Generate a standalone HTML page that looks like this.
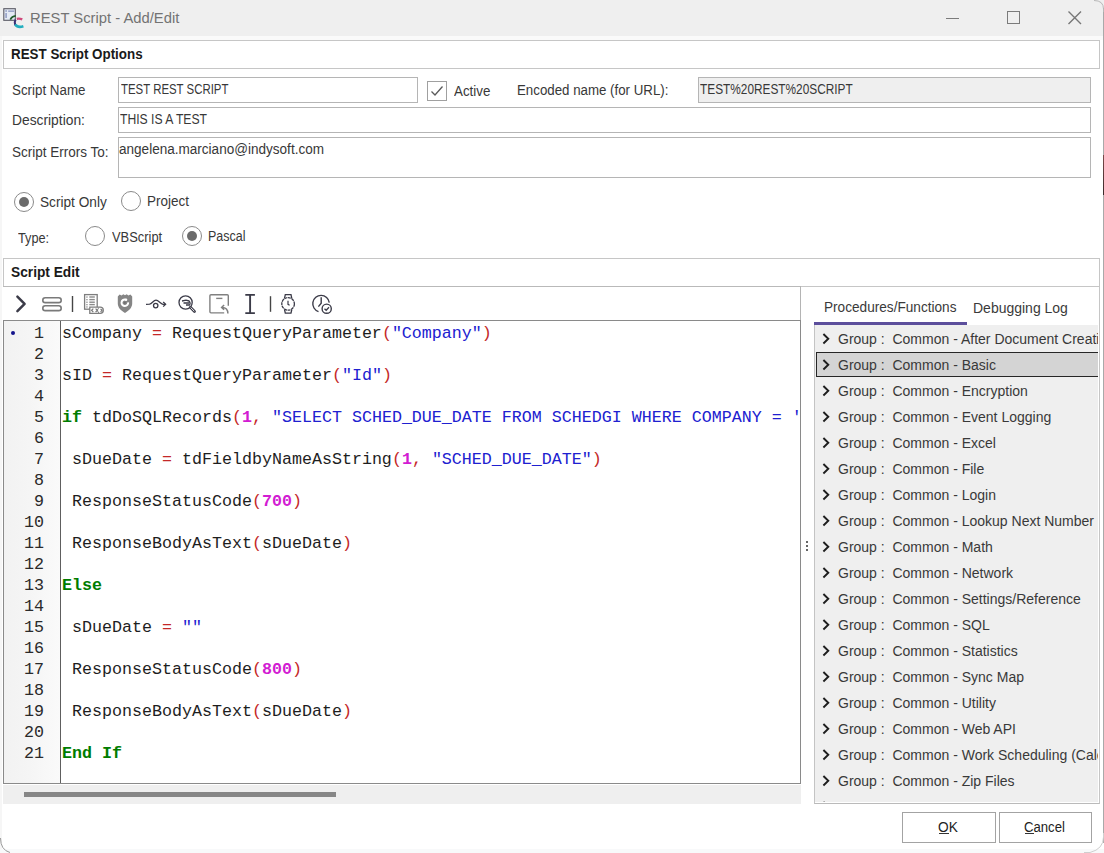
<!DOCTYPE html>
<html><head><meta charset="utf-8">
<style>
*{margin:0;padding:0;box-sizing:border-box}
html,body{width:1104px;height:853px;overflow:hidden;background:#fff}
body{position:relative;font-family:"Liberation Sans",sans-serif;color:#222}
.a{position:absolute}
.t{position:absolute;white-space:pre;line-height:1;transform-origin:0 0}
.box{position:absolute;border:1px solid #b5b5b5;background:#fff}
.panel{position:absolute;border:1px solid #c6c6c6;background:#fff}
.radio{position:absolute;width:20px;height:20px;border:1px solid #8a8a8a;border-radius:50%;background:#fff}
.radio.on::after{content:"";position:absolute;left:4px;top:4px;width:10px;height:10px;border-radius:50%;background:#6b6b6b}
.mono{font-family:"Liberation Mono",monospace;font-size:16.66px;line-height:21px;white-space:pre}
.code{position:absolute;color:#1e1e1e}
.ln{position:absolute;color:#2a2a2a;text-align:right}
.op{color:#c42828}
.st{color:#2020d0}
.kw{color:#007c00;font-weight:bold}
.nm{color:#d21cd2;font-weight:bold}
.item{position:absolute;left:1px;width:300px;height:25px}
.item.sel{background:#d4d4d4;border:1px solid #262626}
.item .chev{position:absolute;left:5px;top:7px;width:10px;height:12px}
.item.sel .chev{left:4px;top:6px}
.item .lbl{position:absolute;left:22px;top:3px;white-space:pre;font-size:14px;line-height:16px;color:#393939}
.item.sel .lbl{left:21px;top:2px}
</style></head><body>

<!-- title bar -->
<div class="a" style="left:0;top:0;width:1104px;height:36px;background:#efefef"></div>
<div class="a" style="left:0;top:36px;width:1104px;height:4px;background:#fafafa"></div>
<svg class="a" style="left:0;top:0" width="30" height="32" viewBox="0 0 30 32">
  <rect x="3.8" y="8.7" width="11.5" height="11.6" fill="#e4eaf5" stroke="#5a5a64" stroke-width="1.1"/>
  <rect x="5.4" y="10.3" width="1.4" height="1.4" fill="#7a86b0"/><rect x="8.2" y="10.5" width="6" height="1.3" fill="#8a96c0"/>
  <rect x="5.4" y="13" width="1.4" height="5" fill="#8a96c0"/>
  <path d="M10.3 19.6 Q11.8 16.2 15.8 15.9" fill="none" stroke="#1f5a2a" stroke-width="1.7"/>
  <path d="M16.8 18.8 Q19.6 18.2 22.3 19.4" fill="none" stroke="#d04a7c" stroke-width="2.3"/>
  <path d="M15.6 19.6 Q13.9 22.3 15.2 25" fill="none" stroke="#3a3276" stroke-width="2"/>
  <path d="M15.2 24.4 Q17.6 28 23.4 26.2" fill="none" stroke="#22aebf" stroke-width="2.7"/>
</svg>
<div class="t" id="title" style="left:30.00px;top:9.61px;font-size:15.5px;font-weight:normal;color:#737373;transform:scaleX(0.9539)">REST Script - Add/Edit</div>
<div class="a" style="left:946px;top:18px;width:13px;height:1px;background:#7b7b7b"></div>
<div class="a" style="left:1007px;top:11px;width:13px;height:13px;border:1px solid #7b7b7b"></div>
<svg class="a" style="left:1067px;top:10px" width="16" height="16" viewBox="0 0 16 16"><path d="M1.5 1.5 L14 14 M14 1.5 L1.5 14" stroke="#777" stroke-width="1.4"/></svg>

<!-- window edges -->
<div class="a" style="left:0;top:36px;width:2px;height:817px;background:#f6f6f6"></div>
<div class="a" style="left:1103px;top:8px;width:1px;height:835px;background:#a9a9a9"></div>
<div class="a" style="left:0;top:849px;width:1104px;height:4px;background:#f8f9fa"></div>
<svg class="a" style="left:1084px;top:833px" width="20" height="20" viewBox="0 0 20 20"><path d="M19.5 0 L19.5 4 Q19.5 16 6 19.5 L0 19.5" fill="none" stroke="#cfcfcf" stroke-width="1"/></svg>
<svg class="a" style="left:1090px;top:0" width="14" height="12" viewBox="0 0 14 12"><path d="M4 0.5 Q13.5 0.5 13.5 9 L13.5 12" fill="none" stroke="#b8b8b8" stroke-width="1"/></svg>
<svg class="a" style="left:0;top:838px" width="12" height="15" viewBox="0 0 12 15"><path d="M0.5 0 Q0.5 12 10 14.5" fill="none" stroke="#9a9a9a" stroke-width="1"/></svg>
<!-- outer script edit frame right line -->
<div class="a" style="left:1099px;top:287px;width:1px;height:40px;background:#c6c6c6"></div>
<div class="a" style="left:1103px;top:155px;width:1px;height:40px;background:linear-gradient(#7a4a4a,#3a2a2a)"></div>
<!-- REST Script Options -->
<div class="panel" style="left:3px;top:40px;width:1097px;height:29px"></div>
<div class="t" id="opt" style="left:11.00px;top:47.51px;font-size:13.8px;font-weight:bold;color:#1a1a1a;transform:scaleX(0.9701)">REST Script Options</div>
<div class="t" id="sname" style="left:12.00px;top:83.33px;font-size:14px;font-weight:normal;color:#383838;transform:scaleX(0.9535)">Script Name</div>
<div class="box" style="left:118px;top:77px;width:300px;height:26px"></div>
<div class="t" id="sval" style="left:121.00px;top:82.33px;font-size:14px;font-weight:normal;color:#383838;transform:scaleX(0.8155)">TEST REST SCRIPT</div>
<div class="box" style="left:427px;top:81px;width:20px;height:20px;border-color:#a0a0a0"></div>
<svg class="a" style="left:427px;top:81px" width="20" height="20" viewBox="0 0 20 20"><path d="M4.5 10.5 L8 14 L15.5 5.5" fill="none" stroke="#5a5a5a" stroke-width="1.3"/></svg>
<div class="t" id="active" style="left:454.00px;top:84.33px;font-size:14px;font-weight:normal;color:#383838;transform:scaleX(0.9519)">Active</div>
<div class="t" id="enc" style="left:517.00px;top:83.33px;font-size:14px;font-weight:normal;color:#383838;transform:scaleX(0.9494)">Encoded name (for URL):</div>
<div class="box" style="left:698px;top:77px;width:393px;height:26px;background:#efefef"></div>
<div class="t" id="encval" style="left:700.00px;top:82.33px;font-size:14px;font-weight:normal;color:#383838;transform:scaleX(0.8459)">TEST%20REST%20SCRIPT</div>
<div class="t" id="desc" style="left:12.00px;top:113.33px;font-size:14px;font-weight:normal;color:#383838;transform:scaleX(0.9861)">Description:</div>
<div class="box" style="left:118px;top:107px;width:973px;height:26px"></div>
<div class="t" id="dval" style="left:120.00px;top:112.33px;font-size:14px;font-weight:normal;color:#383838;transform:scaleX(0.8688)">THIS IS A TEST</div>
<div class="t" id="err" style="left:12.00px;top:145.33px;font-size:14px;font-weight:normal;color:#383838;transform:scaleX(0.9653)">Script Errors To:</div>
<div class="box" style="left:118px;top:137px;width:973px;height:41px"></div>
<div class="t" id="eval" style="left:119.00px;top:142.33px;font-size:14px;font-weight:normal;color:#383838;transform:scaleX(0.9675)">angelena.marciano@indysoft.com</div>

<div class="radio on" style="left:14px;top:192px"></div>
<div class="t" id="ronly" style="left:40.00px;top:195.33px;font-size:14px;font-weight:normal;color:#383838;transform:scaleX(0.9748)">Script Only</div>
<div class="radio" style="left:121px;top:191px"></div>
<div class="t" id="rproj" style="left:147.00px;top:194.33px;font-size:14px;font-weight:normal;color:#383838;transform:scaleX(0.9626)">Project</div>
<div class="t" id="type" style="left:18.00px;top:231.33px;font-size:14px;font-weight:normal;color:#383838;transform:scaleX(0.9091)">Type:</div>
<div class="radio" style="left:85px;top:226px"></div>
<div class="t" id="rvb" style="left:111.50px;top:230.33px;font-size:14px;font-weight:normal;color:#383838;transform:scaleX(0.9203)">VBScript</div>
<div class="radio on" style="left:182px;top:226px"></div>
<div class="t" id="rpas" style="left:207.50px;top:229.33px;font-size:14px;font-weight:normal;color:#383838;transform:scaleX(0.8906)">Pascal</div>

<!-- Script Edit -->
<div class="panel" style="left:3px;top:258px;width:1097px;height:29px"></div>
<div class="a" style="left:3px;top:286px;width:798px;height:1px;background:#b9b9b9"></div>
<div class="t" id="sedit" style="left:11.00px;top:265.51px;font-size:13.8px;font-weight:bold;color:#1a1a1a;transform:scaleX(0.9947)">Script Edit</div>

<!-- toolbar -->
<div class="a" style="left:800px;top:286px;width:1px;height:35px;background:#b4b4b4"></div>
<svg class="a" style="left:0;top:287px" width="340" height="34" viewBox="0 287 340 34">
  <path d="M17.4 296.6 L24.6 303.9 L17.4 311.2" fill="none" stroke="#3b3b48" stroke-width="2.5" stroke-linecap="round" stroke-linejoin="round"/>
  <rect x="42.8" y="297.8" width="18.4" height="4.8" rx="2.4" fill="none" stroke="#7a7a7a" stroke-width="1.6"/>
  <rect x="42.8" y="305.8" width="18.4" height="4.8" rx="2.4" fill="none" stroke="#7a7a7a" stroke-width="1.6"/>
  <rect x="71.8" y="296" width="1.4" height="16" fill="#454545"/>
  <rect x="84.6" y="294.6" width="12.6" height="14.6" fill="#fff" stroke="#7d7d7d" stroke-width="1.3"/>
  <g fill="#8a8a8a"><rect x="86.3" y="296.4" width="1.3" height="1.3"/><rect x="89.3" y="296.3" width="5.5" height="1.4"/>
  <rect x="86.3" y="299" width="1.3" height="1.3"/><rect x="89.3" y="298.9" width="5.5" height="1.4"/>
  <rect x="86.3" y="301.6" width="1.3" height="1.3"/><rect x="89.3" y="301.5" width="5.5" height="1.4"/>
  <rect x="86.3" y="304" width="1.3" height="1.3"/><rect x="89.3" y="303.9" width="5.5" height="1.4"/>
  <rect x="86.3" y="306.3" width="1.3" height="1.3"/></g>
  <path d="M89.8 307.2 L100.2 307.2 A3.1 3.1 0 0 1 100.2 313.4 L89.8 313.4 Z" fill="#fff" stroke="#7d7d7d" stroke-width="1.3"/>
  <path d="M99.2 307.6 A3 3 0 0 0 99.2 313" fill="none" stroke="#7d7d7d" stroke-width="1"/>
  <path d="M93.3 308.6 L91.6 310.3 L93.3 312 M95.6 308.6 L97.3 310.3 L95.6 312 M100.6 308.8 L102 310.3 L100.6 311.8" fill="none" stroke="#777" stroke-width="1.2"/>
  <path d="M117.8 296.6 L119.6 294.6 L121.6 295.6 L123.3 294.3 L125 295.3 L126.7 294.3 L128.4 295.6 L130.4 294.6 L132.2 296.6 L132.2 303.6 C132.2 307.6 129 310.9 125 312.9 C121 310.9 117.8 307.6 117.8 303.6 Z" fill="#858585"/>
  <path d="M125.4 299.5 A3.3 3.3 0 1 0 128.1 302.3" fill="none" stroke="#fff" stroke-width="2"/>
  <circle cx="126" cy="299.8" r="1.3" fill="#fff"/>
  <circle cx="124.8" cy="302.8" r="1.1" fill="#707070"/>
  <path d="M146 304.3 L149.6 304.2 C152 303.6 153.5 300.2 156 300.2 C158.6 300.2 160.4 303.8 163 304.3 L165.4 304.3" fill="none" stroke="#3b3b48" stroke-width="1.25"/>
  <path d="M163.2 302 L165.6 304.3 L163.2 306.6" fill="none" stroke="#3b3b48" stroke-width="1.3"/>
  <circle cx="155.7" cy="305.6" r="2.2" fill="#fff" stroke="#3b3b48" stroke-width="1.3"/>
  <circle cx="185.6" cy="302.5" r="6.6" fill="none" stroke="#3b3b48" stroke-width="1.3"/>
  <path d="M190.4 307.3 L194.5 311.4" stroke="#3b3b48" stroke-width="2.8" stroke-linecap="round"/>
  <path d="M190.6 307.5 L194.3 311.2" stroke="#fff" stroke-width="0.9"/>
  <path d="M182 301 L186 300.2 L189.2 301 M183.5 303 L189 303 M186 305 L189 305 M189 301 C190.2 302.5 190.2 304.5 189 305.5" fill="none" stroke="#3b3b48" stroke-width="1.3"/>
  <path d="M224.2 312.9 L211 312.9 Q209.9 312.9 209.9 311.8 L209.9 295.8 Q209.9 294.7 211 294.7 L227.2 294.7 Q228.3 294.7 228.3 295.8 L228.3 305.7" fill="none" stroke="#808080" stroke-width="1.4"/>
  <path d="M216.2 298.4 L222.4 298.4" stroke="#808080" stroke-width="1.4"/>
  <path d="M227.9 313.6 C227.9 309.6 226.5 307.4 222 307.4 M224.1 305 L221.6 307.4 L224.1 309.8" fill="none" stroke="#808080" stroke-width="1.5"/>
  <path d="M245.3 294.9 L254.9 294.9 M250.1 294.9 L250.1 313.1 M245.3 313.1 L254.9 313.1" fill="none" stroke="#3b3b48" stroke-width="1.9"/>
  <rect x="269.8" y="296.2" width="1.4" height="15.6" fill="#454545"/>
  <path d="M284.5 298.3 L285.3 294.6 L291 294.6 L291.8 298.3 M284.5 309.5 L285.3 313.2 L291 313.2 L291.8 309.5" fill="none" stroke="#3b3b48" stroke-width="1.3"/>
  <circle cx="288.1" cy="303.9" r="6.3" fill="#fff" stroke="#3b3b48" stroke-width="1.3" stroke-dasharray="3 0.6"/>
  <path d="M288 300.8 L288 304.3 L289.6 305.2" fill="none" stroke="#3b3b48" stroke-width="1.2"/>
  <path d="M318.5 311.6 A8.3 8.3 0 1 1 329.3 302.6" fill="none" stroke="#3b3b48" stroke-width="1.4"/>
  <path d="M321.2 297.3 L321.2 303.3 L318.4 306.6" fill="none" stroke="#3b3b48" stroke-width="1.4"/>
  <circle cx="326.7" cy="308.7" r="4.6" fill="#fff" stroke="#3b3b48" stroke-width="1.4"/>
  <path d="M324.5 308.7 L326.2 310.3 L329 307.3" fill="none" stroke="#3b3b48" stroke-width="1.3"/>
</svg>

<!-- editor -->
<div class="a" style="left:3px;top:320px;width:798px;height:464px;border:1px solid #8a8a8a;background:#fff;overflow:hidden">
  <div class="a" style="left:0;top:0;width:57px;height:462px;background:linear-gradient(90deg,#f2f2f2 0,#f5f5f5 45%,#fafafa 100%);border-right:1px solid #5e5e5e"></div>
  <div class="a" style="left:7px;top:10px;width:4px;height:4px;border-radius:50%;background:#14148c"></div>
  <div class="ln mono" style="left:0;top:2px;width:40px">1
2
3
4
5
6
7
8
9
10
11
12
13
14
15
16
17
18
19
20
21</div>
  <div class="code mono" style="left:58px;top:2px">sCompany <span class="op">=</span> RequestQueryParameter<span class="op">(</span><span class="st">"Company"</span><span class="op">)</span>

sID <span class="op">=</span> RequestQueryParameter<span class="op">(</span><span class="st">"Id"</span><span class="op">)</span>

<span class="kw">if</span> tdDoSQLRecords<span class="op">(</span><span class="nm">1</span><span class="op">,</span> <span class="st">"SELECT SCHED_DUE_DATE FROM SCHEDGI WHERE COMPANY = '" + sCompany + "'"</span><span class="op">)</span>

 sDueDate <span class="op">=</span> tdFieldbyNameAsString<span class="op">(</span><span class="nm">1</span><span class="op">,</span> <span class="st">"SCHED_DUE_DATE"</span><span class="op">)</span>

 ResponseStatusCode<span class="op">(</span><span class="nm">700</span><span class="op">)</span>

 ResponseBodyAsText<span class="op">(</span>sDueDate<span class="op">)</span>

<span class="kw">Else</span>

 sDueDate <span class="op">=</span> <span class="st">""</span>

 ResponseStatusCode<span class="op">(</span><span class="nm">800</span><span class="op">)</span>

 ResponseBodyAsText<span class="op">(</span>sDueDate<span class="op">)</span>

<span class="kw">End If</span></div>
</div>

<!-- h scrollbar -->
<div class="a" style="left:3px;top:785px;width:798px;height:19px;background:#efefef"></div>
<div class="a" style="left:24px;top:792px;width:312px;height:5px;background:#878787"></div>

<!-- splitter dots -->
<div class="a" style="left:806px;top:541px;width:2px;height:2px;background:#333;border-radius:1px"></div>
<div class="a" style="left:806px;top:545px;width:2px;height:2px;background:#333;border-radius:1px"></div>
<div class="a" style="left:806px;top:549px;width:2px;height:2px;background:#333;border-radius:1px"></div>

<!-- right panel tabs -->
<div class="t" id="tab1" style="left:824.00px;top:300.33px;font-size:14px;font-weight:normal;color:#3a3a3a;transform:scaleX(0.9727)">Procedures/Functions</div>
<div class="t" id="tab2" style="left:973.00px;top:300.97px;font-size:14.4px;font-weight:normal;color:#3a3a3a;transform:scaleX(0.9720)">Debugging Log</div>
<div class="a" style="left:814px;top:322px;width:153px;height:3px;background:#5c4f9c"></div>
<div class="a" style="left:814px;top:325px;width:286px;height:479px;background:#fff;border-left:1px solid #c4c4c4;border-right:1px solid #c6c6c6;border-bottom:1px solid #bababa">
<div class="a" style="left:0;top:0;width:283px;height:477px;background:#efefef;overflow:hidden">
<div class="item" style="top:1px"><svg class="chev" viewBox="0 0 10 12"><path d="M2.4 1.0 L7.3 5.75 L2.4 10.5" fill="none" stroke="#1e1e1e" stroke-width="1.9"/></svg><div class="lbl" style="left:22px;top:5px;font-size:14px;transform:scaleX(1.0);transform-origin:0 0">Group :  Common - After Document Creation</div></div>
<div class="item sel" style="top:27px"><svg class="chev" viewBox="0 0 10 12"><path d="M2.4 1.0 L7.3 5.75 L2.4 10.5" fill="none" stroke="#1e1e1e" stroke-width="1.9"/></svg><div class="lbl" style="left:21px;top:4px;font-size:14px;transform:scaleX(1.0);transform-origin:0 0">Group :  Common - Basic</div></div>
<div class="item" style="top:53px"><svg class="chev" viewBox="0 0 10 12"><path d="M2.4 1.0 L7.3 5.75 L2.4 10.5" fill="none" stroke="#1e1e1e" stroke-width="1.9"/></svg><div class="lbl" style="left:22px;top:5px;font-size:14px;transform:scaleX(1.0);transform-origin:0 0">Group :  Common - Encryption</div></div>
<div class="item" style="top:79px"><svg class="chev" viewBox="0 0 10 12"><path d="M2.4 1.0 L7.3 5.75 L2.4 10.5" fill="none" stroke="#1e1e1e" stroke-width="1.9"/></svg><div class="lbl" style="left:22px;top:5px;font-size:14px;transform:scaleX(1.0);transform-origin:0 0">Group :  Common - Event Logging</div></div>
<div class="item" style="top:105px"><svg class="chev" viewBox="0 0 10 12"><path d="M2.4 1.0 L7.3 5.75 L2.4 10.5" fill="none" stroke="#1e1e1e" stroke-width="1.9"/></svg><div class="lbl" style="left:22px;top:5px;font-size:14px;transform:scaleX(1.0);transform-origin:0 0">Group :  Common - Excel</div></div>
<div class="item" style="top:131px"><svg class="chev" viewBox="0 0 10 12"><path d="M2.4 1.0 L7.3 5.75 L2.4 10.5" fill="none" stroke="#1e1e1e" stroke-width="1.9"/></svg><div class="lbl" style="left:22px;top:5px;font-size:14px;transform:scaleX(1.0);transform-origin:0 0">Group :  Common - File</div></div>
<div class="item" style="top:157px"><svg class="chev" viewBox="0 0 10 12"><path d="M2.4 1.0 L7.3 5.75 L2.4 10.5" fill="none" stroke="#1e1e1e" stroke-width="1.9"/></svg><div class="lbl" style="left:22px;top:5px;font-size:14px;transform:scaleX(1.0);transform-origin:0 0">Group :  Common - Login</div></div>
<div class="item" style="top:183px"><svg class="chev" viewBox="0 0 10 12"><path d="M2.4 1.0 L7.3 5.75 L2.4 10.5" fill="none" stroke="#1e1e1e" stroke-width="1.9"/></svg><div class="lbl" style="left:22px;top:5px;font-size:14px;transform:scaleX(1.0);transform-origin:0 0">Group :  Common - Lookup Next Number</div></div>
<div class="item" style="top:209px"><svg class="chev" viewBox="0 0 10 12"><path d="M2.4 1.0 L7.3 5.75 L2.4 10.5" fill="none" stroke="#1e1e1e" stroke-width="1.9"/></svg><div class="lbl" style="left:22px;top:5px;font-size:14px;transform:scaleX(1.0);transform-origin:0 0">Group :  Common - Math</div></div>
<div class="item" style="top:235px"><svg class="chev" viewBox="0 0 10 12"><path d="M2.4 1.0 L7.3 5.75 L2.4 10.5" fill="none" stroke="#1e1e1e" stroke-width="1.9"/></svg><div class="lbl" style="left:22px;top:5px;font-size:14px;transform:scaleX(1.0);transform-origin:0 0">Group :  Common - Network</div></div>
<div class="item" style="top:261px"><svg class="chev" viewBox="0 0 10 12"><path d="M2.4 1.0 L7.3 5.75 L2.4 10.5" fill="none" stroke="#1e1e1e" stroke-width="1.9"/></svg><div class="lbl" style="left:22px;top:5px;font-size:14px;transform:scaleX(1.0);transform-origin:0 0">Group :  Common - Settings/Reference</div></div>
<div class="item" style="top:287px"><svg class="chev" viewBox="0 0 10 12"><path d="M2.4 1.0 L7.3 5.75 L2.4 10.5" fill="none" stroke="#1e1e1e" stroke-width="1.9"/></svg><div class="lbl" style="left:22px;top:5px;font-size:14px;transform:scaleX(1.0);transform-origin:0 0">Group :  Common - SQL</div></div>
<div class="item" style="top:313px"><svg class="chev" viewBox="0 0 10 12"><path d="M2.4 1.0 L7.3 5.75 L2.4 10.5" fill="none" stroke="#1e1e1e" stroke-width="1.9"/></svg><div class="lbl" style="left:22px;top:5px;font-size:14px;transform:scaleX(1.0);transform-origin:0 0">Group :  Common - Statistics</div></div>
<div class="item" style="top:339px"><svg class="chev" viewBox="0 0 10 12"><path d="M2.4 1.0 L7.3 5.75 L2.4 10.5" fill="none" stroke="#1e1e1e" stroke-width="1.9"/></svg><div class="lbl" style="left:22px;top:5px;font-size:14px;transform:scaleX(1.0);transform-origin:0 0">Group :  Common - Sync Map</div></div>
<div class="item" style="top:365px"><svg class="chev" viewBox="0 0 10 12"><path d="M2.4 1.0 L7.3 5.75 L2.4 10.5" fill="none" stroke="#1e1e1e" stroke-width="1.9"/></svg><div class="lbl" style="left:22px;top:5px;font-size:14px;transform:scaleX(1.0);transform-origin:0 0">Group :  Common - Utility</div></div>
<div class="item" style="top:391px"><svg class="chev" viewBox="0 0 10 12"><path d="M2.4 1.0 L7.3 5.75 L2.4 10.5" fill="none" stroke="#1e1e1e" stroke-width="1.9"/></svg><div class="lbl" style="left:22px;top:5px;font-size:14px;transform:scaleX(1.0);transform-origin:0 0">Group :  Common - Web API</div></div>
<div class="item" style="top:417px"><svg class="chev" viewBox="0 0 10 12"><path d="M2.4 1.0 L7.3 5.75 L2.4 10.5" fill="none" stroke="#1e1e1e" stroke-width="1.9"/></svg><div class="lbl" style="left:22px;top:5px;font-size:14px;transform:scaleX(1.0);transform-origin:0 0">Group :  Common - Work Scheduling (Calendar)</div></div>
<div class="item" style="top:443px"><svg class="chev" viewBox="0 0 10 12"><path d="M2.4 1.0 L7.3 5.75 L2.4 10.5" fill="none" stroke="#1e1e1e" stroke-width="1.9"/></svg><div class="lbl" style="left:22px;top:5px;font-size:14px;transform:scaleX(1.0);transform-origin:0 0">Group :  Common - Zip Files</div></div>
<div class="item" style="top:469px"><svg class="chev" viewBox="0 0 10 12"><path d="M2.4 1.0 L7.3 5.75 L2.4 10.5" fill="none" stroke="#1e1e1e" stroke-width="1.9"/></svg></div>
</div></div>

<!-- buttons -->
<div class="box" style="left:902px;top:812px;width:94px;height:31px;border-color:#a3a3a3"></div>
<div class="t" id="ok" style="left:938.00px;top:820.33px;font-size:14px;font-weight:normal;color:#222222;transform:scaleX(0.9765)">OK</div>
<div class="a" style="left:939px;top:833px;width:10px;height:1px;background:#333"></div>
<div class="box" style="left:999px;top:812px;width:93px;height:31px;border-color:#a3a3a3"></div>
<div class="t" id="cancel" style="left:1024.00px;top:820.33px;font-size:14px;font-weight:normal;color:#222222;transform:scaleX(0.9388)">Cancel</div>
<div class="a" style="left:1025px;top:833px;width:9px;height:1px;background:#333"></div>

</body></html>
